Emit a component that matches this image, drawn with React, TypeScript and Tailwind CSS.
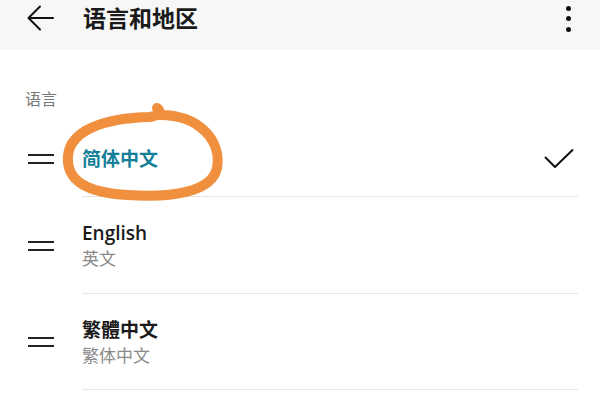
import React from "react";

const font = { fontFamily: '"Open Sans", "Noto Sans CJK SC", sans-serif' };

type Lang = { name: string; sub?: string; active?: boolean; height: string };

const langs: Lang[] = [
	{ name: "简体中文", active: true, height: "h-[76px]" },
	{ name: "English", sub: "英文", height: "h-[97px]" },
	{ name: "繁體中文", sub: "繁体中文", height: "h-[96px]" },
];

export default function App() {
	return (
		<div className="relative h-[400px] w-[600px] overflow-hidden bg-white" style={font}>
			{/* Header */}
			<div className="flex h-[50px] items-start bg-[#f7f7f7]">
				<div className="flex h-[36px] w-full items-center">
					<svg width="28" height="26" viewBox="0 0 28 26" className="ml-[27px]" fill="none" stroke="#111" strokeWidth="2" strokeLinecap="round" strokeLinejoin="round">
						<path d="M26 13H2" />
						<path d="M13 1.5L1.5 13L13 24.5" />
					</svg>
					<span className="ml-[28px] text-[23px] font-bold leading-none text-[#1a1a1a]">语言和地区</span>
					<div className="ml-auto mr-[29px] flex flex-col gap-[5.5px] pt-[1px]">
						<span className="h-[5px] w-[5px] rounded-full bg-[#111]" />
						<span className="h-[5px] w-[5px] rounded-full bg-[#111]" />
						<span className="h-[5px] w-[5px] rounded-full bg-[#111]" />
					</div>
				</div>
			</div>

			{/* Section label */}
			<div className="mb-[11px] pl-[25px] pt-[38px] text-[16px] leading-[22px] text-[#777]">语言</div>

			{/* Language list */}
			{langs.map((l) => (
				<div key={l.name} className={`flex ${l.height}`}>
					<div className="flex w-[82px] items-center pl-[28px]">
						<div className="flex w-[26px] flex-col gap-[6px]">
							<span className="h-[2px] w-full bg-[#222]" />
							<span className="h-[2px] w-full bg-[#222]" />
						</div>
					</div>
					<div className="mr-[22px] flex flex-1 items-center border-b border-[#e6e6e6]">
						<div className="flex flex-col">
							<span className={`text-[19px] font-semibold leading-[24px] ${l.active ? "text-[#137f99]" : "text-[#1a1a1a]"}`}>{l.name}</span>
							{l.sub && <span className="mt-[4px] text-[17px] leading-[20px] text-[#8a8a8a]">{l.sub}</span>}
						</div>
						{l.active && (
							<svg width="30" height="22" viewBox="0 0 30 22" className="ml-auto mr-[4px]" fill="none" stroke="#111" strokeWidth="2" strokeLinecap="round" strokeLinejoin="round">
								<path d="M1.5 9.5L11 19L28.5 2" />
							</svg>
						)}
					</div>
				</div>
			))}

			{/* Hand-drawn orange mark */}
			<svg className="pointer-events-none absolute left-0 top-0" width="600" height="400" viewBox="0 0 600 400" fill="none">
				<path
					d="M158 115 C 198 114, 222 140, 217 168 C 212 192, 172 198, 128 195 C 86 193, 66 180, 68 156 C 70 130, 105 118, 150 117 C 156 116, 163 112, 157 108"
					stroke="#f0903f"
					strokeWidth="10"
					strokeLinecap="round"
					strokeLinejoin="round"
				/>
			</svg>
		</div>
	);
}
